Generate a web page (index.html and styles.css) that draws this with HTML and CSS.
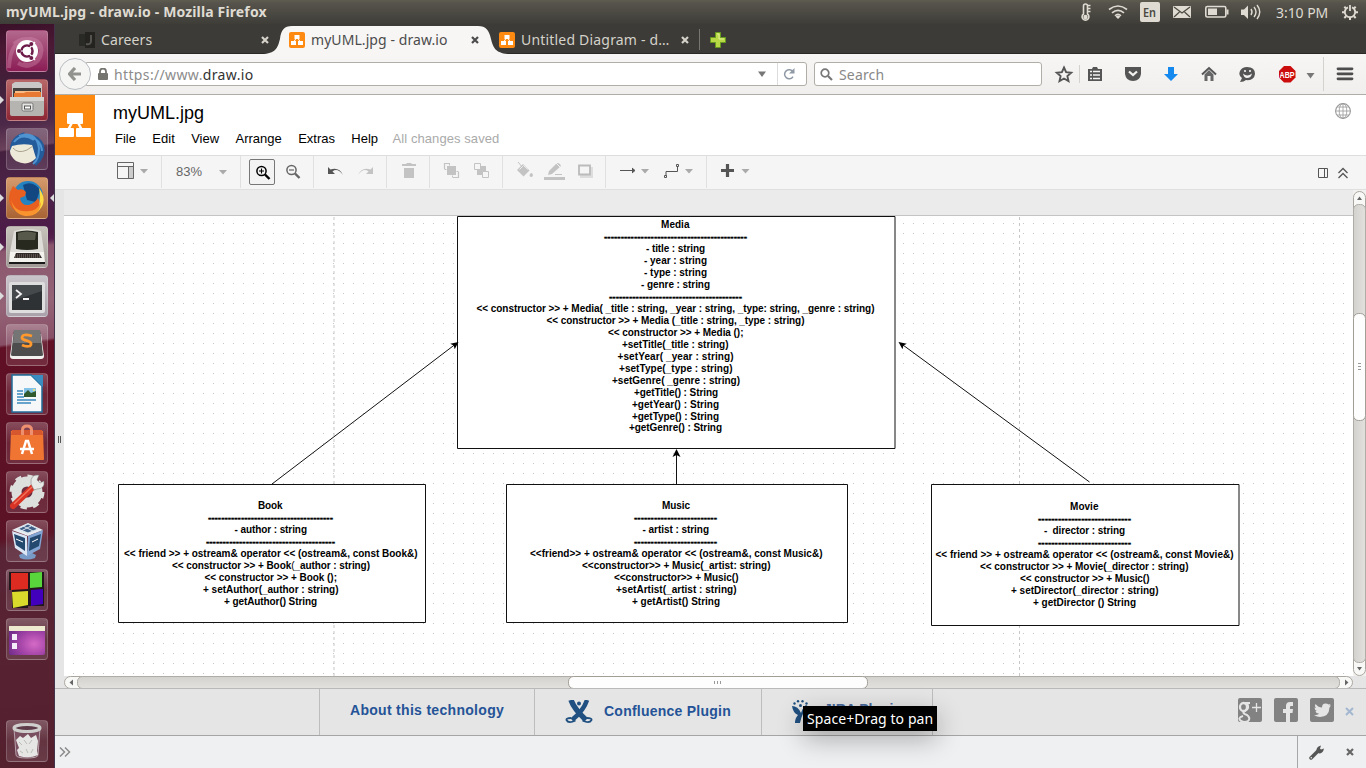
FILE: index.html
```html
<!DOCTYPE html>
<html lang="en">
<head>
<meta charset="utf-8">
<title>myUML.jpg - draw.io</title>
<link rel="stylesheet" href="styles.css">
</head>
<body>
<div class="desktop">
  <header class="panel">
    <span class="panel-title">myUML.jpg - draw.io - Mozilla Firefox</span>
    <svg class="tray" width="198" height="24" viewBox="1074 0 198 24">
      <g fill="none" stroke="#dfdbd2" stroke-width="1.6">
        <path d="M1083.500 14V6a2 2 0 0 1 4 0v8a3.400 3.400 0 1 1-4 0zM1087.500 5.500h3M1087.500 8.500h3M1087.500 11.500h3"/>
        <path d="M1109 9.500q9-7 18 0M1112 12.800q6-5 12 0M1115 15.800q3-3 6 0"/>
        <rect x="1205.800" y="6.500" width="20" height="10.500" rx="1.500"/>
        <path d="M1251 9q2 3 0 6M1254 7q4 5 0 10M1257 5q5.500 7 0 14" stroke-width="1.400"/>
      </g>
      <g fill="#dfdbd2">
        <circle cx="1085.500" cy="17" r="2.200"/><path d="M1115.500 16.500q2.500-2 5 0l-2.500 2.500z"/>
        <rect x="1140" y="2" width="20" height="20" rx="2"/>
        <rect x="1173" y="6" width="18" height="12" rx="1"/>
        <rect x="1208" y="8.500" width="9" height="6.500"/><rect x="1226.500" y="9.500" width="2" height="5"/>
        <path d="M1241 9.500h3l4-4v13.500l-4-4h-3z"/>
      </g>
      <path d="M1174 7l8 6 8-6M1174 17l5.500-5M1190 17l-5.500-5" fill="none" stroke="#4a4841" stroke-width="1.200"/>
      <text class="lang" x="1143" y="17" textLength="13" lengthAdjust="spacingAndGlyphs">En</text>
    </svg>
    <span class="clock">3:10 PM</span>
    <svg class="gear" width="18" height="18" viewBox="0 0 18 18"><g fill="none" stroke="#dfdbd2"><path d="M7 4.300a5.200 5.200 0 1 0 4 0" stroke-width="1.900"/><path d="M9 2v6" stroke-width="1.800"/><path d="M1 9.300h2.500M14.500 9.300H17M3.300 3.700l1.800 1.800M14.700 3.700l-1.800 1.800M3.300 15l1.800-1.800M14.700 15l-1.800-1.800M9 14.500V17" stroke-width="2"/></g></svg>
  </header>

  <nav class="launcher">
    <div class="tile rose"><svg viewBox="0 0 42 42"><path d="M3 38Q4 8 25 9q14 3 9 18-5 10-17 7M8 14Q22 2 36 20M12 33q16 10 24-14" fill="none" stroke="#d997b8" stroke-width="4" opacity=".35"/><circle cx="21" cy="21" r="11" fill="#fff"/><circle cx="21" cy="21" r="5.500" fill="none" stroke="#6c1c49" stroke-width="2.600"/><path d="M21 21L29 12M21 21L29 30M21 21H10" stroke="#fff" stroke-width="1.200"/><circle cx="21" cy="21" r="4.200" fill="#fff"/><g fill="#6c1c49"><circle cx="13" cy="21" r="2"/><circle cx="25.300" cy="14" r="2"/><circle cx="25.300" cy="28" r="2"/></g></svg></div>
    <div class="tile red"><i class="run"></i><svg viewBox="0 0 42 42"><path d="M6 5l3-2h24l3 2v13H6z" fill="#c9c8c6"/><path d="M7 9h28v9H7z" fill="#45423f"/><path d="M9 12h25v3H9z" fill="#f9ba83"/><path d="M8 14h10l2-1h15v5H8z" fill="#e77932"/><path d="M4 18h34v17q0 2-2 2H6q-2 0-2-2z" fill="#b5b4b1"/><path d="M4 18h34v4H4z" fill="#d4d3d0"/><rect x="16" y="24" width="11" height="8" rx="1.500" fill="#e6e6e4" stroke="#777" /><rect x="18.500" y="27" width="6" height="3" fill="#fff" stroke="#555"/></svg></div>
    <div class="tile dim"><svg viewBox="0 0 42 42"><path d="M4 24Q3 8 19 4L16 8Q32 3 38 17q3 12-8 21l-3-5z" fill="#235b9b"/><path d="M13 8q17-6 20 12 0 12-6 16M8 14Q16 4 28 12M20 8q15 2 16 15" fill="none" stroke="#4f93d1" stroke-width="2"/><path d="M6 18q10-3 20-1l4 13q-8 9-20 3-6-5-6-10z" fill="#eeeada"/><path d="M7 20q5 6 14 2l6-4" fill="none" stroke="#aaa48f"/></svg></div>
    <div class="tile orange"><i class="run"></i><i class="focus"></i><svg viewBox="0 0 42 42"><circle cx="22" cy="19" r="15" fill="#2683c2"/><path d="M17 8q10-5 17 5l-4 12-9-2z" fill="#134781"/><path d="M33 11q11 15-4 26 7-12 4-26z" fill="#ffdb43"/><path d="M7 9l5 4q5-2 8 2l-1 4-5 2q1 8 9 7 6-2 9-7 4 7-2 13-8 6-17 2Q0 30 4 15z" fill="#e95f1f"/><path d="M5 22q3 14 18 12 8 0 12-9-1 15-16 14Q7 37 5 22z" fill="#f8932e"/></svg></div>
    <div class="tile grey"><i class="run"></i><svg viewBox="0 0 42 42"><path d="M8 5q14-4 27 0l3 21H4z" fill="#deddd7"/><path d="M10 6q11-3 22 0v17q-11 2-22 0z" fill="#27291f"/><path d="M12 7q9-3 18 0l-1 7H12z" fill="#575a4b"/><path d="M4 26h34l1 11H3z" fill="#f3f2ed"/><path d="M10 27h23l3 5H8z" fill="#302b29"/><path d="M9 29h25M9 31h26" stroke="#84766c" stroke-dasharray="1 1"/><path d="M3 36h36v2H3z" fill="#191919"/></svg></div>
    <div class="tile silver"><i class="run"></i><svg viewBox="0 0 42 42"><rect x="3" y="7" width="36" height="31" rx="2" fill="#dededf"/><rect x="6" y="10" width="30" height="25" fill="#2f3234"/><path d="M6 10h30v6L6 26z" fill="#46494b"/><path d="M10 15l5 4-5 4M17 24h6" fill="none" stroke="#f2f2f2" stroke-width="1.800"/></svg></div>
    <div class="tile dim"><svg viewBox="0 0 42 42"><path d="M7 10L4 32q0 3 3 3h28q3 0 3-3L35 10z" fill="#f2f2f0"/><path d="M8 6h26l3 25q0 1-2 1H7q-2 0-2-1z" fill="#4d4d4d"/><path d="M8 6h26l1 13H7z" fill="#757575"/><path d="M26 12q-10-3-10 2 1 2 6 3 5 2 2 5-4 1-8-1" fill="none" stroke="#ff982d" stroke-width="2.800"/></svg></div>
    <div class="tile dim"><svg viewBox="0 0 42 42"><path d="M6 2h19l11 11v26H6z" fill="#f5f7f8" stroke="#1f6d9a" stroke-width="1.500"/><path d="M25 2h12v12z" fill="#398dc0"/><path d="M11 18h6M11 21h6M11 24h7M11 27h19M11 30h14" stroke="#3988bc" stroke-width="1.700"/><path d="M18 15h12v9H18z" fill="#84c3e7"/><path d="M18 24v-3l4-4 3 3 5-2v6z" fill="#31592e"/><circle cx="28" cy="17" r="1" fill="#ffe95b"/></svg></div>
    <div class="tile dim"><svg viewBox="0 0 42 42"><path d="M5 9h32l1 28q0 1-1 1H5q-1 0-1-1z" fill="#f17532"/><path d="M6 8h30l1 5H5z" fill="#d6572d"/><path d="M16.500 13V8q0-4 4.500-4t4.500 4v5" fill="none" stroke="#ec9070" stroke-width="3"/><path d="M16 32l4-13h2l4 13M14 27h14" fill="none" stroke="#fff" stroke-width="2.500"/></svg></div>
    <div class="tile dim"><svg viewBox="0 0 42 42"><circle cx="21" cy="21" r="10.500" fill="none" stroke="#dddfdd" stroke-width="10"/><circle cx="21" cy="21" r="16" fill="none" stroke="#dddfdd" stroke-width="3" stroke-dasharray="6.300 6.260"/><path d="M7 35L28 15" stroke="#d83324" stroke-width="6" stroke-linecap="round"/><path d="M8 33L26 16" stroke="#f17258" stroke-width="1.500"/><path d="M25 13q-1-10 8-9l-2 5 3 3 4-2q1 8-7 8l-3 1z" fill="#e7e9e6" stroke="#777" stroke-width=".5"/></svg></div>
    <div class="tile dim"><svg viewBox="0 0 42 42"><path d="M13 35l9-4 8 4-1 3q-8 3-15 0z" fill="#789ac6"/><path d="M6 10l16-7 15 7-15 6z" fill="#e9edf1"/><path d="M12 9l10-5 10 5-10 4zM17 6l10 5M15 11l10-5" fill="#3f5f87" stroke="#dce6ef"/><path d="M6 11l15 5v20L9 28z" fill="#dce7f5"/><path d="M22 16l15-6-3 19-13 7z" fill="#82a5d3"/><path d="M8 14l11 4v13l-9-6zM24 18l11-4-2 12-10 5z" fill="#24496f"/><path d="M10 19l7 3M26 22l6-3" stroke="#fff"/></svg></div>
    <div class="tile dim"><svg viewBox="0 0 42 42"><path d="M3 3h19v36H6V21H3zM21 3h17v34H21z" fill="#22171a"/><path d="M5 4h17v16l-17 1z" fill="#de2b21"/><path d="M24 4l12-1v15l-12 1z" fill="#58d63c"/><path d="M6 23l16-1v14L7 39z" fill="#dada2d"/><path d="M25 21l12-1v15l-12 2z" fill="#4200bd"/></svg></div>
    <div class="tile dim"><svg viewBox="0 0 42 42"><defs><radialGradient id="glow" cx=".7" cy=".62" r=".8"><stop stop-color="#d56ac6"/><stop offset=".5" stop-color="#a445a8"/><stop offset="1" stop-color="#6d2a88"/></radialGradient></defs><rect x="3" y="8" width="36" height="29" rx="2" fill="url(#glow)"/><path d="M3 8h36v5H3z" fill="#eeeacf"/><path d="M6 16h5v6H6zM6 25h5v6H6z" fill="#f5ecfa"/></svg></div>
    <div class="tile dim trash"><svg viewBox="0 0 42 42"><path d="M8 8l2 27q0 3 11 3t11-3l2-27" fill="#7a5060" stroke="#b8a2ab"/><path d="M10 20l4-4 3 2 5-4 3 4 5-3 2 6-1 10 1 4q-9 4-19 1l-2-6 2-2z" fill="#e6e7e4"/><path d="M13 22l3 3M18 20l3 4M26 20l-3 4M14 31l3 2M20 29l2 4M27 29l-2 4" fill="none" stroke="#b9bcb7"/><ellipse cx="21" cy="8" rx="13" ry="3.500" fill="#5d3b48" stroke="#cfd0cd" stroke-width="3"/></svg></div>
  </nav>

  <main class="browser">
    <div class="tabs">
      <div class="tab first">
        <svg class="favicon" viewBox="0 0 16 16"><path d="M0 2h6v12H0z" fill="#292926"/><path d="M6 0h10v16H6z" fill="#24231f"/><path d="M12 3v6q0 4-5 3" fill="none" stroke="#55544f" stroke-width="2"/></svg>
        <span class="name careers">Careers</span><span class="close"><svg viewBox="0 0 8 8"><path d="M1 1l6 6M7 1L1 7"/></svg></span>
      </div>
      <div class="tab active">
        <svg class="tab-shape" width="244" height="30" viewBox="264 24 244 30"><path d="M264 54C277 53 278 46 280 39C281 30 284 26 292 26H478C486 26 489 30 491 39C493 47 495 53 508 54z" fill="#f7f6f5"/></svg>
        <svg class="favicon" viewBox="0 0 16 16"><rect width="16" height="16" rx="2" fill="#ff8a12"/><path d="M8 5L4 11M8 5l4 6" stroke="#fff"/><path d="M5.500 3h5v4h-5zM2 9h5v4H2zM9 9h5v4H9z" fill="#fff"/></svg>
        <span class="name uml">myUML.jpg - draw.io</span><span class="close"><svg viewBox="0 0 8 8"><path d="M1 1l6 6M7 1L1 7"/></svg></span>
      </div>
      <div class="tab last">
        <svg class="favicon" viewBox="0 0 16 16"><rect width="16" height="16" rx="2" fill="#ff8a12"/><path d="M8 5L4 11M8 5l4 6" stroke="#fff"/><path d="M5.500 3h5v4h-5zM2 9h5v4H2zM9 9h5v4H9z" fill="#fff"/></svg>
        <span class="name untitled">Untitled Diagram - d…</span><span class="close"><svg viewBox="0 0 8 8"><path d="M1 1l6 6M7 1L1 7"/></svg></span>
      </div>
      <svg class="newtab" width="16" height="16" viewBox="0 0 16 16"><path d="M5.500.500h5v5h5v5h-5v5h-5v-5h-5v-5h5z" fill="#b8d845" stroke="#679a1f"/><path d="M7 2h2v5h5" fill="none" stroke="#e0ee9a"/></svg>
    </div>

    <div class="navbar">
      <div class="back"><svg width="14" height="14" viewBox="0 0 14 14"><path d="M7 1L1.500 7 7 13M2 7h11" fill="none" stroke="#92928f" stroke-width="3.200"/></svg></div>
      <div class="urlbar">
        <svg width="10" height="12" viewBox="0 0 10 12"><path d="M2 6V3.500a3 3 0 0 1 6 0V6" fill="none" stroke="#76746f" stroke-width="1.800"/><rect y="5" width="10" height="7" rx="1" fill="#76746f"/></svg>
        <span class="url">https://www.<b>draw.io</b></span>
        <svg class="drop" width="8" height="6" viewBox="0 0 8 6"><path d="M0 .500h8L4 6z" fill="#777"/></svg>
        <span class="reload"><svg width="12" height="12" viewBox="0 0 12 12"><path d="M10 4A4.500 4.500 0 1 0 10 8.500" fill="none" stroke="#8f99a6" stroke-width="1.500"/><path d="M11.500 0v5.500H6z" fill="#8f99a6"/></svg></span>
      </div>
      <div class="search"><svg width="13" height="13" viewBox="0 0 13 13"><circle cx="5" cy="5" r="3.800" fill="none" stroke="#777" stroke-width="1.700"/><path d="M8 8l4 4" stroke="#777" stroke-width="2.200"/></svg><span>Search</span></div>
      <svg class="nav-icons" width="324" height="40" viewBox="1042 54 324 40">
        <path d="M1064 67.500l2.100 4.700 5.100.500-3.800 3.400 1.100 5-4.500-2.600-4.500 2.600 1.100-5-3.800-3.400 5.100-.500z" fill="none" stroke="#555" stroke-width="1.900"/>
        <path d="M1079.500 65v18M1323.500 57v34" stroke="#d4d2cf"/>
        <path d="M1088 69h4l1-2h4l1 2h4v12h-14z" fill="#555"/><path d="M1090 71.500h2M1093 71.500h7M1090 75h2M1093 75h7M1090 78.500h2M1093 78.500h7" stroke="#f5f4f3" stroke-width="1.600"/>
        <path d="M1125 67h16v7q-1 7-8 7t-8-7z" fill="#555"/><path d="M1129 71.500l4 3.500 4-3.500" fill="none" stroke="#f3f2f1" stroke-width="2.300"/>
        <path d="M1168 67h6v7h4l-7 7-7-7h4z" fill="#1689ef"/>
        <path d="M1202 74.500l7-6.500 7 6.500" fill="none" stroke="#555" stroke-width="2"/><path d="M1204.500 74.500l4.500-4.500 4.500 4.500V81h-3v-5h-3v5h-3z" fill="#666"/>
        <path d="M1240 82l2-4q-4-3-2-7 2-4 7-4 8 0 8 7-1 7-9 6-2 2-6 2z" fill="#555"/><path d="M1243 73.500q4 4 9 0-1 4.500-5 4.500-3 0-4-4.500z" fill="#f4f3f2"/><circle cx="1245" cy="71" r="1" fill="#fff"/><circle cx="1250" cy="71" r="1" fill="#fff"/>
        <path d="M1284 66h6.500l5 5v6.500l-5 5H1284l-5-5V71z" fill="#cc0d0d"/><text class="abp" x="1279.500" y="77.500" textLength="15" lengthAdjust="spacingAndGlyphs">ABP</text>
        <path d="M1306.500 73h8l-4 5.500z" fill="#777"/>
        <path d="M1338 68.800h14M1338 73.800h14M1338 78.800h14" stroke="#4d4d4d" stroke-width="2.800" stroke-linecap="round"/>
      </svg>
    </div>

    <div class="app-head">
      <div class="logo"><svg width="40" height="60" viewBox="55 95 40 60"><path d="M75 117L67 132M75 117l8 15" stroke="#fff" stroke-width="2.500"/><g fill="#fff"><rect x="67" y="113" width="16" height="11" rx="1"/><rect x="59" y="128" width="15" height="9" rx="1"/><rect x="76" y="128" width="15" height="9" rx="1"/></g></svg></div>
      <div class="head-text">
        <div class="filename">myUML.jpg</div>
        <div class="menu"><span>File</span><span>Edit</span><span>View</span><span>Arrange</span><span>Extras</span><span>Help</span><em>All changes saved</em></div>
      </div>
      <svg class="globe" width="16" height="16" viewBox="0 0 16 16"><g fill="none" stroke="#999" stroke-width=".8"><circle cx="8" cy="8" r="7.400" stroke-width="1.100"/><ellipse cx="8" cy="8" rx="3.800" ry="7.400"/><path d="M8 .500v15M.500 8h15M2 4h12M2 12h12"/></g></svg>
    </div>

    <div class="toolbar">
      <div class="tools g1"><svg width="106" height="32" viewBox="55 156 106 32"><rect x="129" y="167" width="5" height="12" fill="#ccc"/><path d="M117.500 162.500h16v16h-16zM117.500 166.500h16M128.500 166.500v12" fill="none" stroke="#666"/><path d="M140 169h8l-4 4.500z" fill="#aaa"/></svg></div>
      <div class="tools g2"><span class="zoom">83%</span><svg width="8" height="5" viewBox="0 0 8 5"><path d="M0 0h8L4 4.500z" fill="#aaa"/></svg></div>
      <div class="tools g3"><button class="zoom-in"><svg width="16" height="16" viewBox="0 0 16 16"><circle cx="6.500" cy="6" r="4.600" fill="none" stroke="#000" stroke-width="1.500"/><path d="M4 6h5M6.500 3.500v5" stroke="#000" stroke-width="1.100"/><path d="M10 9.500l4.500 4.500" stroke="#000" stroke-width="2.400"/></svg></button><svg width="16" height="16" viewBox="0 0 16 16"><circle cx="6.500" cy="6" r="4.600" fill="none" stroke="#666" stroke-width="1.500"/><path d="M4 6h5" stroke="#666" stroke-width="1.200"/><path d="M10 9.500l4.500 4.500" stroke="#666" stroke-width="2.400"/></svg></div>
      <div class="tools g4"><svg width="72" height="32" viewBox="314 156 72 32"><path d="M328 167v7h7l-2.500-2.500q5-4 10.500 3.500-4-8.500-12.500-5.500z" fill="#555"/><path d="M373 167v7h-7l2.500-2.500q-5-4-10.500 3.500 4-8.500 12.500-5.500z" fill="#c3c3c3"/></svg></div>
      <div class="tools g5"><svg width="42" height="32" viewBox="387 156 42 32"><path d="M402 164h4.500v-1h5v1h4.500v2h-14zM404 168h10v10h-10z" fill="#c3c3c3"/></svg></div>
      <div class="tools g6"><svg width="72" height="32" viewBox="430 156 72 32"><g fill="#c3c3c3"><path d="M447 166h9v9h-9zM477 166h9v9h-9z"/></g><g fill="none" stroke="#c3c3c3"><path d="M450 163.500h-5.500v5.500M453 177.500h5.500V172" stroke-width="1.200"/><path d="M444.500 163.500h5v2M444.500 169.500h2M458.500 171.500h-2M452.500 177.500v-2"/></g><g fill="#f5f5f5" stroke="#c3c3c3"><path d="M474.500 163.500h6v6h-6zM482.500 171.500h6v6h-6z"/></g></svg></div>
      <div class="tools g7"><svg width="102" height="32" viewBox="503 156 102 32"><g fill="#c3c3c3"><path d="M517 170l6-6 6.500 6.500-6 6z"/><path d="M519.500 169.500l4-4 4.500 4" stroke="#eee"/><path d="M518 162l5 6" stroke="#c3c3c3"/><path d="M529.500 175q2-4 3.500 0 0 2-1.700 2-1.800 0-1.800-2z"/><path d="M548 175l1-4 8-8q3 0 4 3l-9 8z"/><path d="M556 163l4 4" stroke="#f5f5f5"/><path d="M544 177h21v3h-21zM555 174h7v1h-7z"/></g><path d="M580 167h13v11h-13z" fill="#ddd"/><path d="M579 165.500h11v9h-11z" fill="#f5f5f5" stroke="#bbb" stroke-width="1.800"/></svg></div>
      <div class="tools g8"><svg width="100" height="32" viewBox="606 156 100 32"><g fill="none" stroke="#555"><path d="M620 170.500h14M632 168l3 2.500-3 2.500M666 176v-4.500h11.500V167"/><path d="M664.500 175.500h2v2h-2zM676.500 164.500h2v2h-2z"/></g><path d="M632 168l3 2.500-3 2.500z" fill="#555"/><path d="M641 169h8l-4 4.500zM685 169h8l-4 4.500z" fill="#aaa"/></svg></div>
      <div class="tools g9"><svg width="50" height="32" viewBox="707 156 50 32"><path d="M721 170.500h13M727.500 164v13" stroke="#555" stroke-width="3.200"/><path d="M741.500 169h8l-4 4.500z" fill="#aaa"/></svg></div>
      <svg class="view-toggles" width="40" height="32" viewBox="1313 156 40 32"><g fill="none" stroke="#555"><path d="M1318.500 168.500h9v9h-9zM1324.500 168.500v9"/><path d="M1338.500 173l4.500-4.500 4.500 4.500M1338.500 178l4.500-4.500 4.500 4.500" stroke-width="1.300"/></g></svg>
    </div>

    <div class="workspace">
      <div class="splitter"><span></span></div>
      <div class="canvas">
        <svg width="1289" height="486" viewBox="64 190 1289 486">
          <defs><pattern id="grid" x="73" y="223" width="10" height="10" patternUnits="userSpaceOnUse"><rect width="1" height="1" fill="#c6c6c6"/></pattern></defs>
          <rect x="64" y="190" width="1289" height="486" fill="#ebebeb"/>
          <rect x="64" y="216" width="1289" height="460" fill="#fff"/><rect x="64" y="216" width="1289" height="460" fill="url(#grid)"/>
          <path d="M64 215.500h1289" stroke="#c4c4c4"/>
          <path d="M334 217v459M1019.500 217v459" stroke="#c7c7c7" stroke-dasharray="3 3"/>
          <g fill="#fff" stroke="#111"><path d="M457.500 216.500h437.500v232H457.500zM118.500 484.500h307v138h-307zM506.500 484.500h341v138h-341zM931.500 484.500h307.500v141h-307.500z"/></g>
          <path d="M272 484L455 344.500M1089.500 482L902 344.300M676.500 484v-32" stroke="#111"/>
          <g fill="#000"><path d="M458.500 342l-3.800 7.200-1-3.800-3.500-1.700zM898.500 342l8.300 1.700-3.400 1.700-.9 3.800zM676.500 449l4 8-4-2-4 2z"/></g>
          <g class="uml-text">
            <text x="661" y="228" textLength="28.500">Media</text>
            <text class="rule" x="604" y="240" textLength="143">-------------------------------------------</text>
            <text x="646" y="252" textLength="59">- title : string</text>
            <text x="644" y="264" textLength="63">- year : string</text>
            <text x="644" y="276" textLength="63">- type : string</text>
            <text x="641" y="288" textLength="69">- genre : string</text>
            <text class="rule" x="609" y="300" textLength="133">----------------------------------------</text>
            <text x="476.500" y="312" textLength="398">&lt;&lt; constructor &gt;&gt; + Media( _title : string, _year : string, _type: string, _genre : string)</text>
            <text x="546.500" y="324" textLength="258">&lt;&lt; constructor &gt;&gt; + Media (_title : string, _type : string)</text>
            <text x="608" y="336" textLength="135.500">&lt;&lt; constructor &gt;&gt; + Media ();</text>
            <text x="622" y="348" textLength="106.500">+setTitle(_title : string)</text>
            <text x="617.500" y="360" textLength="116">+setYear( _year : string)</text>
            <text x="619" y="372" textLength="113.500">+setType(_type : string)</text>
            <text x="612" y="384" textLength="128">+setGenre( _genre : string)</text>
            <text x="634" y="396" textLength="84">+getTitle() : String</text>
            <text x="632" y="408" textLength="87">+getYear() : String</text>
            <text x="632" y="420" textLength="87">+getType() : String</text>
            <text x="629" y="431" textLength="93">+getGenre() : String</text>

            <text x="258" y="509" textLength="24.500">Book</text>
            <text class="rule" x="208" y="521" textLength="125">--------------------------------------</text>
            <text x="234.500" y="533" textLength="72.500">- author : string</text>
            <text class="rule" x="206" y="545" textLength="129">---------------------------------------</text>
            <text x="124" y="557" textLength="293.500">&lt;&lt; friend &gt;&gt; + ostream&amp; operator &lt;&lt; (ostream&amp;, const Book&amp;)</text>
            <text x="172" y="569" textLength="198">&lt;&lt; constructor &gt;&gt; + Book<tspan class="light">(</tspan>_author : string)</text>
            <text x="204.500" y="581" textLength="132.500">&lt;&lt; constructor &gt;&gt; + Book ();</text>
            <text x="203" y="593" textLength="135.500">+ setAuthor(_author : string)</text>
            <text x="224" y="605" textLength="93">+ getAuthor() String</text>

            <text x="662" y="509" textLength="28">Music</text>
            <text class="rule" x="634" y="521" textLength="83">-------------------------</text>
            <text x="642.500" y="533" textLength="66.500">- artist : string</text>
            <text class="rule" x="634" y="545" textLength="83">-------------------------</text>
            <text x="530" y="557" textLength="292.500">&lt;&lt;friend&gt;&gt; + ostream&amp; operator &lt;&lt; (ostream&amp;, const Music&amp;)</text>
            <text x="582" y="569" textLength="188.500">&lt;&lt;constructor&gt;&gt; + Music(_artist: string)</text>
            <text x="614" y="581" textLength="124.500">&lt;&lt;constructor&gt;&gt; + Music()</text>
            <text x="616" y="593" textLength="120.500">+setArtist(_artist : string)</text>
            <text x="632" y="605" textLength="88">+ getArtist() String</text>

            <text x="1070" y="510" textLength="28.500">Movie</text>
            <text class="rule" x="1038" y="522" textLength="93">----------------------------</text>
            <text x="1044" y="534" textLength="81">- &#160;director : string</text>
            <text class="rule" x="1038" y="546" textLength="93">----------------------------</text>
            <text x="935.500" y="558" textLength="298">&lt;&lt; friend &gt;&gt; + ostream&amp; operator &lt;&lt; (ostream&amp;, const Movie&amp;)</text>
            <text x="980" y="570" textLength="208.500">&lt;&lt; constructor &gt;&gt; + Movie(_director : string)</text>
            <text x="1020" y="582" textLength="129.500">&lt;&lt; constructor &gt;&gt; + Music()</text>
            <text x="1011" y="594" textLength="147.500">+ setDirector(_director : string)</text>
            <text x="1033" y="606" textLength="103">+ getDirector () String</text>
          </g>
        </svg>
      </div>
      <svg class="vbar" width="13" height="486" viewBox="0 0 13 486"><defs><linearGradient id="vt"><stop stop-color="#d3d2ce"/><stop offset="1" stop-color="#e2e1de"/></linearGradient></defs><rect width="13" height="486" fill="#f2f1f0"/><rect x=".500" y="1.500" width="12" height="484" rx="6" fill="#f8f8f7" stroke="#aaa69f"/><rect x=".500" y="14.500" width="12" height="458" rx="5" fill="url(#vt)" stroke="#b0ada6"/><rect x=".500" y="123.500" width="12" height="107" rx="5" fill="#fdfdfd" stroke="#a29e96"/><path d="M4 10l2.500-3.500L9 10zM4 477l2.500 3.500L9 477z" fill="#666"/><path d="M5 173.500h3M5 176.500h3M5 179.500h3" stroke="#999"/></svg>
    </div>
    <div class="hbar"><svg width="1289" height="12" viewBox="64 676 1289 12"><defs><linearGradient id="ht" x2="0" y2="1"><stop stop-color="#d3d2ce"/><stop offset="1" stop-color="#e2e1de"/></linearGradient></defs><rect x="64.500" y="676.500" width="1288" height="12" rx="6" fill="#f8f8f7" stroke="#aaa69f"/><rect x="77.500" y="676.500" width="1262" height="12" rx="5" fill="url(#ht)" stroke="#b0ada6"/><rect x="568.500" y="676.500" width="299" height="12" rx="5" fill="#fdfdfd" stroke="#a29e96"/><path d="M73 679.500v6l-3.500-3zM1345 679.500v6l3.500-3z" fill="#666"/><path d="M714.500 681v3M717.500 681v3M720.500 681v3" stroke="#999"/></svg></div>

    <footer class="footer">
      <div class="promo about"><a>About this technology</a></div>
      <div class="promo confluence"><svg width="28" height="24" viewBox="0 0 28 24"><g fill="none" stroke="#205081"><path d="M6 0q3 9 15 20" stroke-width="5.500"/><path d="M22 0Q19 10 7 20" stroke-width="4.500"/><path d="M6 18q-5 0-4.500 2 2 4 9 .500M22 18q5 0 4.500 2-2 4-9 .500" stroke-width="1.800"/></g><circle cx="14" cy="3.500" r="2" fill="#205081"/></svg><a>Confluence Plugin</a></div>
      <div class="promo jira"><svg width="24" height="24" viewBox="0 0 24 24"><g fill="#205081"><circle cx="2.500" cy="3.500" r="1.200"/><circle cx="6" cy="1.300" r="1.200"/><circle cx="10.500" cy="1.300" r="1.200"/><circle cx="14.500" cy="3.500" r="1.200"/><path d="M0 6q6 0 9 7 2-6 5-8l3 2q-7 5-9 16H3q0-5 3-8-5-2-6-9z"/><circle cx="8.500" cy="5.500" r="1.500"/></g></svg><a>JIRA Plugin</a></div>
      <div class="social">
        <svg width="24" height="24" viewBox="0 0 24 24"><rect width="24" height="24" rx="2" fill="#828282"/><g fill="none" stroke="#e5e5e5"><ellipse cx="5.500" cy="9" rx="3.500" ry="4" stroke-width="2.300"/><path d="M6 5h6M9 5q3 6-2 8-4 2 2 4 4 3 1 6-3 2-7 0-4-3 2-5" stroke-width="2"/><path d="M14 9.500h9M18.500 5v9" stroke-width="1.300"/></g></svg>
        <svg width="24" height="24" viewBox="0 0 24 24"><rect width="24" height="24" rx="2" fill="#828282"/><path d="M12 24v-9H9v-4h3V8q0-4 4-4h3v4h-2q-1 0-1 1v2h3l-.500 4H16v9z" fill="#e5e5e5"/></svg>
        <svg width="24" height="24" viewBox="0 0 24 24"><rect width="24" height="24" rx="2" fill="#828282"/><path d="M4 17q4 0 5-1.500-3 0-3.500-2.500h1.500Q4.500 12 4.500 9.500l1.500.500Q4 8 5.500 6q3 3.500 6.500 3.500 0-4 3.500-4 2 0 3 1l2-.500-1 1.800 1.500-.200-1.500 2Q19 19 10 19q-3 0-6-2z" fill="#e5e5e5"/></svg>
        <svg class="dismiss" width="9" height="9" viewBox="0 0 9 9"><path d="M1 1l7 7M8 1L1 8" stroke="#a3b8d0" stroke-width="2"/></svg>
      </div>
      <div class="tooltip">Space+Drag to pan</div>
    </footer>

    <div class="addonbar">
      <svg width="12" height="10" viewBox="0 0 12 10"><path d="M1 .500L5.500 5 1 9.500M6 .500L10.500 5 6 9.500" fill="none" stroke="#8c8c8c" stroke-width="1.500"/></svg>
      <div class="addon-right"><svg width="15" height="15" viewBox="0 0 15 15"><path d="M2 13L9 6" stroke="#555" stroke-width="3.500" stroke-linecap="round"/><path d="M8 7q-2-5 4-6.500l-1 3 1 1 3-1q-1 5-5 5z" fill="#555"/><circle cx="2.300" cy="12.700" r=".8" fill="#eee"/></svg><svg width="8" height="8" viewBox="0 0 8 8"><path d="M1 1l6 6M7 1L1 7" stroke="#666" stroke-width="2.200"/></svg></div>
    </div>
  </main>
</div>
</body>
</html>
```
FILE: styles.css
```css
* { box-sizing: border-box; }
body { margin: 0; overflow: hidden; }
svg { display: block; flex: none; }
.desktop { width: 1366px; height: 768px; display: grid; grid-template: 24px 744px / 55px 1311px; font-family: "Noto Sans", "Open Sans", sans-serif; }

.panel { grid-column: 1 / 3; display: flex; align-items: center; background: linear-gradient(#5f5c51, #55534b 15%, #3e3d38); color: #dfdbd2; }
.panel-title { width: 1067px; padding-left: 6px; font-size: 14px; font-weight: 700; line-height: 24px; white-space: nowrap; letter-spacing: .14px; }
.tray { margin-left: 7px; }
.lang { font: 600 12px "Noto Sans", sans-serif; fill: #4a4841; }
.clock { width: 64px; padding-left: 4px; font-size: 14px; white-space: nowrap; letter-spacing: -.05px; }
.gear { margin-left: 5px; }

.launcher { display: flex; flex-direction: column; gap: 7px; padding: 6px 0 0 6px; border-right: 1px solid #42324a;
  background: linear-gradient(172deg, #3a1029 0, #4c1935 28px, #41203b 60px, #4d2949 100px, #6b425b 125px, #46203f 127px, #4b2348 168px, #4d1b48 212px, #55214f 220px, #8a566e 226px, #946376 280px, #885066 318px, #600f24 321px, #5b1326 510px, #592435 520px, #54202e 100%); }
.tile { position: relative; width: 42px; height: 42px; flex: none; border-radius: 4px; border: 1px solid rgba(255,255,255,.18); }
.tile svg { width: 42px; height: 42px; margin: -1px; }
.rose { background: linear-gradient(#b3688c, #8b1d55); }
.red { background: linear-gradient(#b86869, #8d2634); }
.dim { background: linear-gradient(rgba(255,255,255,.25), rgba(255,255,255,.09) 50%, rgba(255,255,255,.12)); }
.orange { background: linear-gradient(#d59b6d, #a86334); }
.grey { background: linear-gradient(#c7c3bb, #a19a96); }
.silver { background: linear-gradient(#c9c4ca, #aaa2aa); }
.trash { margin-top: 53px; }
.run, .focus { position: absolute; top: 16px; border: 4px solid transparent; }
.run { left: -7px; border-left-color: #ddd; border-right-width: 0; }
.focus { left: 43px; border-right-color: #ddd; border-left-width: 0; }

.browser { display: flex; flex-direction: column; min-width: 0; }
.tabs { height: 30px; flex: none; display: flex; background: #3c3b37; color: #d5d2ca; border-bottom: 1px solid #2a2925; font-size: 14px; }
.tab { position: relative; display: flex; align-items: center; padding-top: 3px; }
.tab .favicon { width: 16px; height: 16px; position: relative; }
.name { position: relative; width: 160px; margin-left: 6px; white-space: nowrap; line-height: 20px; }
.first { width: 221px; padding-left: 24px; }
.active { width: 222px; padding-left: 13px; color: #4c4c4c; }
.last { width: 202px; padding-left: 1px; }
.tab-shape { position: absolute; left: -12px; top: 0; }
.careers { letter-spacing: .1px; }
.uml { letter-spacing: .07px; }
.untitled { letter-spacing: .19px; }
.close { position: relative; width: 8px; }
.close svg { width: 8px; height: 8px; stroke: currentColor; stroke-width: 2.2; }
.newtab { margin: 8px 0 0 10px; }
.last::after { content: ""; position: absolute; right: 0; top: 5px; height: 21px; width: 1px; background: #777670; }

.navbar { height: 41px; flex: none; display: flex; align-items: center; background: linear-gradient(#f7f6f5, #f0efed); border-bottom: 1px solid #b0ada7; padding-left: 4px; }
.back { z-index: 1; width: 32px; height: 32px; border: 1px solid #b9bdc3; border-radius: 50%; background: #f5f5f4; display: grid; place-items: center; flex: none; }
.urlbar { width: 721px; height: 24px; margin-left: -5px; padding-left: 11px; border: 1px solid #b1aea8; border-radius: 0 3px 3px 0; background: #fff; display: flex; align-items: center; flex: none; }
.url { width: 644px; margin-left: 6px; padding-top: 1px; font-size: 14px; line-height: 20px; color: #8c8c8c; letter-spacing: .36px; }
.url b { font-weight: 400; color: #333; }
.reload { height: 22px; margin-left: 11px; padding: 5px 0 0 5px; border-left: 1px solid #dcdcdc; }
.search { width: 228px; height: 24px; margin-left: 7px; padding-left: 5px; border: 1px solid #b1aea8; border-radius: 3px; background: #fff; display: flex; align-items: center; gap: 6px; color: #888; font-size: 14px; line-height: 20px; letter-spacing: .15px; flex: none; }
.search span { padding-top: 1px; }
.abp { font: 700 9px "Liberation Sans", sans-serif; fill: #fff; }

.app-head { height: 61px; flex: none; display: flex; background: #fff; border-bottom: 1px solid #dedede; font-family: "Liberation Sans", Arial, sans-serif; color: #000; }
.logo { width: 40px; height: 60px; background: #ff8a0f; }
.head-text { width: 1240px; padding: 7px 0 0 18px; }
.filename { font-size: 18px; line-height: 22px; }
.menu { display: flex; gap: 16.4px; padding: 7px 0 0 2px; font-size: 13px; line-height: 16px; white-space: nowrap; }
.menu em { font-style: normal; color: #aaa; margin-left: -2px; letter-spacing: .08px; }
.globe { margin-top: 8px; }

.toolbar { height: 34px; flex: none; display: flex; background: #f5f5f5; border-bottom: 1px solid #dfdfdf; font-family: "Liberation Sans", Arial, sans-serif; }
.tools { height: 32px; display: flex; align-items: center; border-right: 1px solid #e0e0e0; box-sizing: content-box; flex: none; }
.g1 { width: 106px; } .g2 { width: 78px; } .g3 { width: 72px; } .g4 { width: 72px; } .g5 { width: 42px; } .g6 { width: 72px; } .g7 { width: 102px; } .g8 { width: 100px; } .g9 { width: 50px; border: 0; }
.zoom { width: 43px; margin: -1px 0 0 14px; font-size: 13px; color: #666; }
.zoom-in { width: 26px; height: 26px; margin: 0 10px 0 8px; padding: 2px 0 0 5px; border: 1px solid #777; border-radius: 2px; background: #f3f3f3; }
.view-toggles { margin-left: 556px; }

.workspace { height: 486px; flex: none; display: flex; background: #e5e5e5; }
.splitter { width: 9px; display: grid; place-items: center; padding-top: 13px; }
.splitter span { width: 3px; height: 7px; border: solid #555; border-width: 0 1px; }
.uml-text { font: 700 10px "Liberation Sans", Arial, sans-serif; fill: #000; }
.rule { stroke: #000; stroke-width: .35px; }
.light { font-weight: 400; }
.hbar { height: 12px; flex: none; padding-left: 9px; background: #e5e5e5; }

.footer { position: relative; height: 48px; flex: none; display: flex; background: #e5e5e5; border-top: 1px solid #b9b9b9; border-bottom: 1px solid #a5a5a5; padding-left: 264px; font: 700 14px "Liberation Sans", Arial, sans-serif; color: #245397; }
.promo { display: flex; border-left: 1px solid #bdbdbd; padding-top: 11px; white-space: nowrap; }
.about { width: 215px; padding: 13px 0 0 30px; letter-spacing: .3px; }
.confluence { width: 227px; padding-left: 30px; gap: 11px; letter-spacing: .24px; }
.confluence a { padding-top: 3px; }
.jira { width: 172px; border-right: 1px solid #bdbdbd; padding-left: 30px; gap: 8px; }
.jira a { padding-top: 1px; color: #4a6a9c; }
.social { display: flex; gap: 12px; margin-left: 305px; padding-top: 9px; }
.dismiss { margin: 9px 0 0 -1px; }
.tooltip { position: absolute; left: 748px; top: 17px; width: 134px; height: 25px; background: #000; color: #fff; font: 400 14px/25px "Noto Sans", sans-serif; padding-left: 4px; white-space: nowrap; box-shadow: 0 8px 26px rgba(0,0,0,.3); letter-spacing: .08px; }

.addonbar { height: 32px; flex: none; display: flex; align-items: center; justify-content: space-between; background: #eff0f2; padding-left: 4px; }
.addon-right { width: 69px; height: 32px; border-left: 1px solid #a7a7a7; display: flex; align-items: center; padding-left: 11px; gap: 22px; }
```
